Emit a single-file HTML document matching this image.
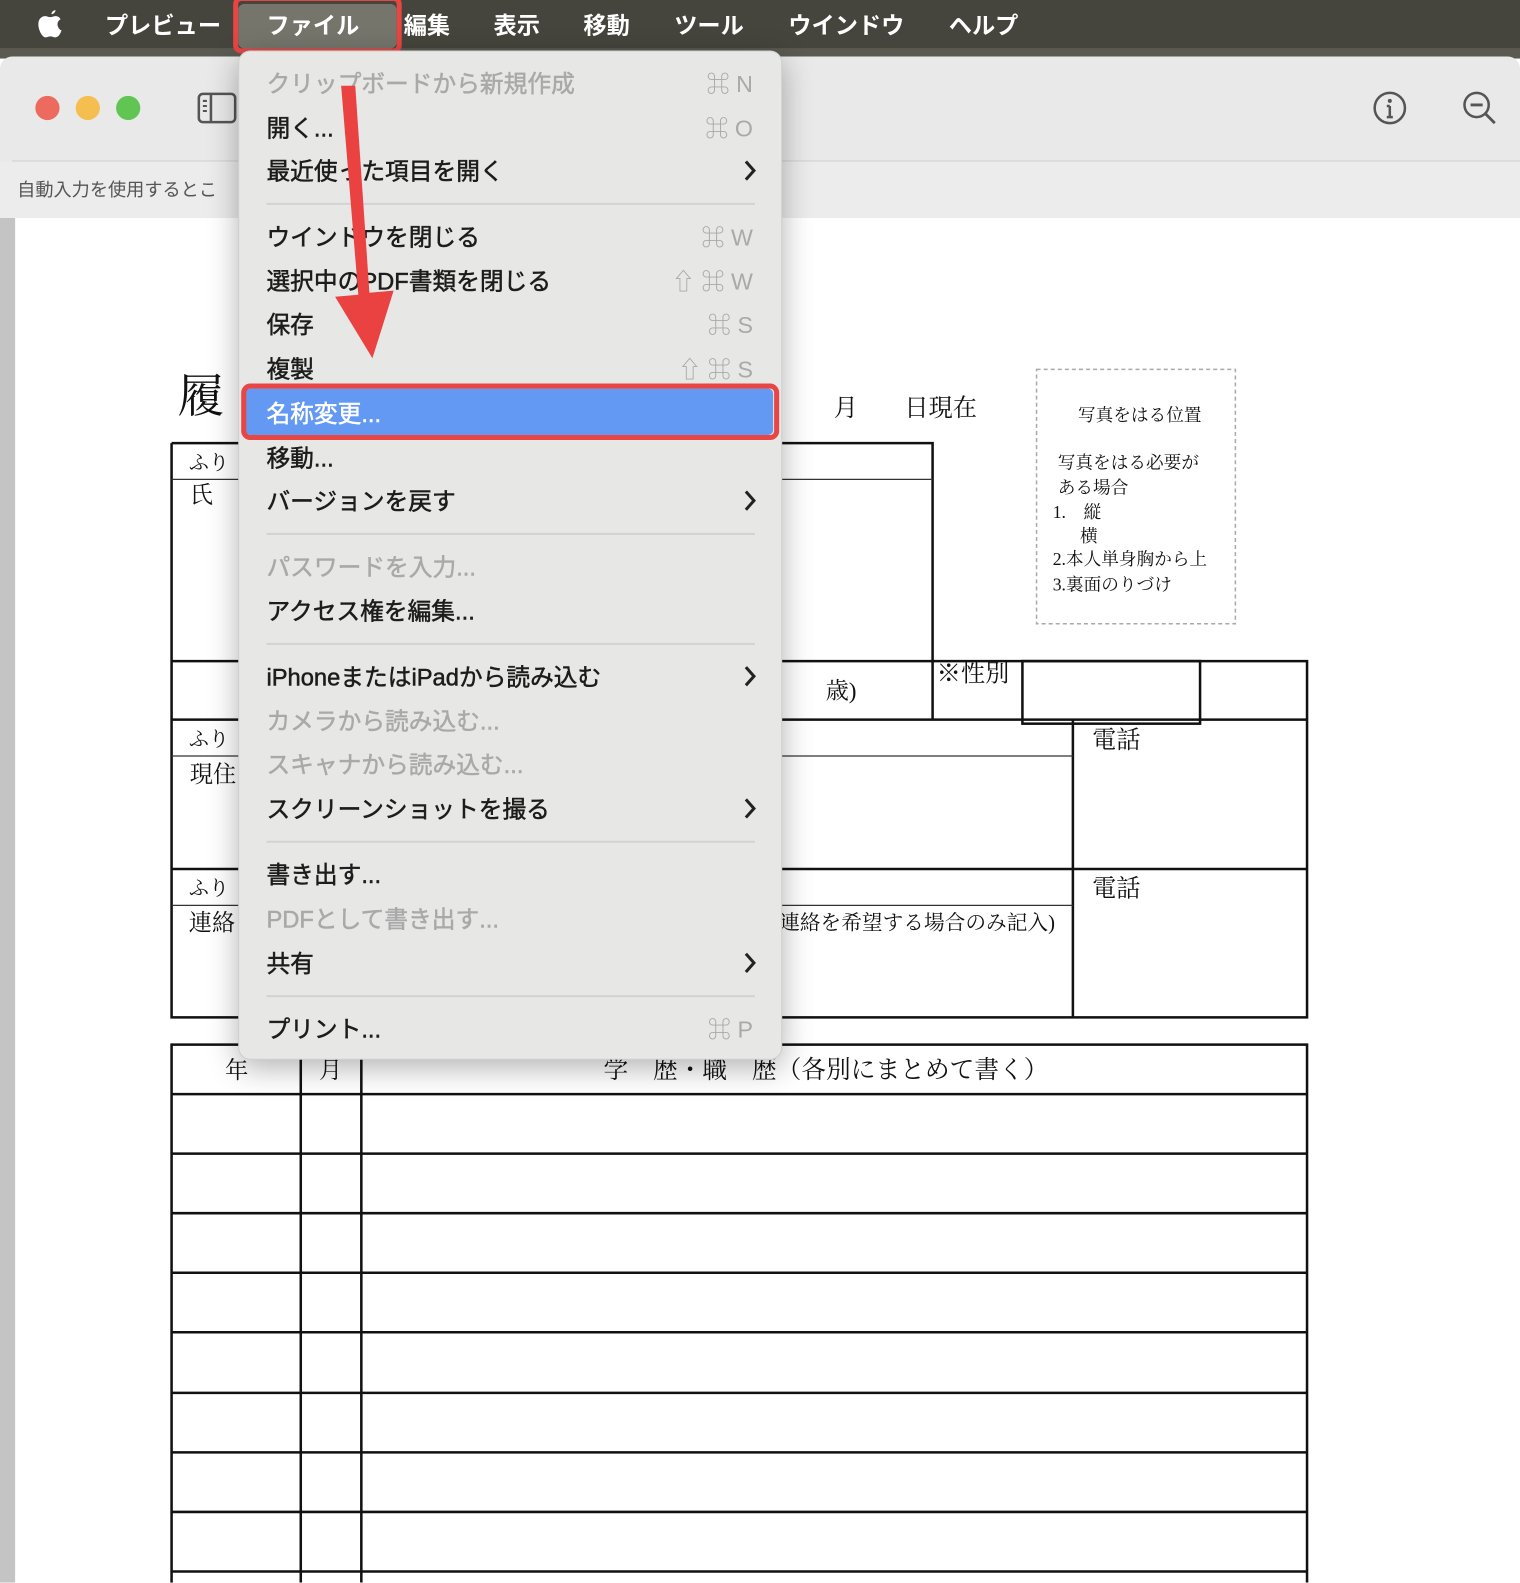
<!DOCTYPE html>
<html><head><meta charset="utf-8"><style>
*{margin:0;padding:0;box-sizing:border-box}
body{width:1520px;height:1583px;overflow:hidden;background:#fff;font-family:"Liberation Sans","Noto Sans CJK JP",sans-serif}
#s{width:1506px;height:1568px;transform:scale(1.0093);transform-origin:0 0;position:relative;overflow:hidden;background:#fff}
.a{position:absolute;white-space:nowrap}
#bar{left:0;top:0;width:1506px;height:48px;background:#45453d}
.mb{top:6px;color:#fff;font-size:23px;font-weight:bold}
#menu{left:236px;top:50px;width:539px;height:1000px;background:#e7e7e6;border-radius:12px;box-shadow:0 8px 30px rgba(0,0,0,.3);border:1px solid #cfcfcf}
.mi{left:27px;font-size:23.5px;color:#1c1c1c;-webkit-text-stroke:0.5px currentColor;margin-top:-4px}
.g{color:#a9a9a9}
.sc{right:28px;font-size:23px;color:#a9a9a9;margin-top:-4px}
.ch{right:24px;margin-top:-4px}
.sep{left:27px;width:484px;height:2px;background:#d3d3d3}
</style></head><body><div id="s">
<div class="a" style="left:0;top:48px;width:1506px;height:10px;background:#5a5a50"></div>
<div class="a" style="left:0;top:56px;width:1506px;height:160px;background:#e9e9e9;border-radius:12px 12px 0 0"></div>
<div class="a" style="left:12px;top:159px;width:1494px;height:1px;background:#d0d0d0"></div>
<div class="a" style="left:0;top:160px;width:1506px;height:56px;background:#ececec"></div>
<div class="a" style="left:17px;top:174px;font-size:18px;color:#555">自動入力を使用するとこ</div>
<div class="a" style="left:0;top:216px;width:15px;height:1352px;background:#c4c4c4"></div>
<div class="a" style="left:35px;top:95px;width:24px;height:24px;border-radius:50%;background:#ec6a5e"></div>
<div class="a" style="left:75px;top:95px;width:24px;height:24px;border-radius:50%;background:#f4bf4f"></div>
<div class="a" style="left:115px;top:95px;width:24px;height:24px;border-radius:50%;background:#61c554"></div>
<svg class="a" style="left:195px;top:91px" width="40" height="32"><rect x="2" y="2" width="36" height="28" rx="4" fill="none" stroke="#555" stroke-width="2.5"/><line x1="14" y1="2" x2="14" y2="30" stroke="#555" stroke-width="2.5"/><path d="M6 9h4M6 14h4M6 19h4" stroke="#555" stroke-width="2"/></svg>
<svg class="a" style="left:1358px;top:88px" width="38" height="38"><circle cx="19" cy="19" r="15" fill="none" stroke="#555" stroke-width="2.5"/><circle cx="19" cy="12" r="2" fill="#555"/><path d="M19 17v11M16 17h3M16 28h6" stroke="#555" stroke-width="2.5"/></svg>
<svg class="a" style="left:1446px;top:88px" width="40" height="40"><circle cx="17" cy="16" r="12" fill="none" stroke="#555" stroke-width="2.5"/><path d="M11 16h12M26 25l9 9" stroke="#555" stroke-width="2.8"/></svg>

<svg class="a" style="left:0;top:0" width="1506" height="1568">
<g stroke="#111" fill="none" stroke-width="2.5">
<path d="M170 439H924V713M170 439V1008H1295V655H924M170 655H924M170 713H1295M170 861H1295M1063 713V1008"/>
<rect x="1013" y="655" width="176" height="62"/>
<rect x="170" y="1035" width="1125" height="540"/>
<path d="M170 1084H1295M170 1143H1295M170 1202H1295M170 1261H1295M170 1320H1295M170 1380H1295M170 1439H1295M170 1498H1295M170 1557H1295M298 1035V1568M358 1035V1568"/>
</g>
<path d="M170 475H924M170 749H1063M170 897H1063" stroke="#333" stroke-width="1.2"/>
<rect x="1027" y="366" width="197" height="252" fill="none" stroke="#aaa" stroke-width="1.5" stroke-dasharray="4 3"/>
<g font-family="Liberation Serif,Noto Serif CJK SC,serif" fill="#111">
<text x="176" y="408" font-size="46">履</text>
<text x="826" y="412" font-size="24">月</text>
<text x="896" y="412" font-size="24">日現在</text>
<text x="1068" y="417" font-size="17.5">写真をはる位置</text>
<text x="1048" y="464" font-size="17.5">写真をはる必要が</text>
<text x="1048" y="489" font-size="17.5">ある場合</text>
<text x="1043" y="513" font-size="17.5">1.　縦</text>
<text x="1070" y="537" font-size="17.5">横</text>
<text x="1043" y="560" font-size="17.5">2.本人単身胸から上</text>
<text x="1043" y="585" font-size="17.5">3.裏面のりづけ</text>
<text x="187" y="465" font-size="20">ふり</text>
<text x="188" y="498" font-size="23">氏</text>
<text x="818" y="692" font-size="23">歳)</text>
<text x="928" y="675" font-size="24">※性別</text>
<text x="187" y="739" font-size="20">ふり</text>
<text x="188" y="775" font-size="23">現住</text>
<text x="1082" y="741" font-size="24">電話</text>
<text x="187" y="887" font-size="20">ふり</text>
<text x="187" y="922" font-size="23">連絡</text>
<text x="1082" y="888" font-size="24">電話</text>
<text x="772" y="921" font-size="20.5">連絡を希望する場合のみ記入)</text>
<text x="223" y="1068" font-size="23">年</text>
<text x="316" y="1068" font-size="23">月</text>
<text x="598" y="1068" font-size="24.5">学　歴・職　歴（各別にまとめて書く）</text>
</g>
</svg>

<div class="a" id="bar"></div>
<svg class="a" style="left:36px;top:8px" width="28" height="32"><path d="M19 2c-2 0-4 2-4 4 2 0 4-2 4-4zM14 9c-2 0-4-1-5-1-4 0-7 3-7 8 0 6 4 13 7 13 2 0 3-1 5-1s3 1 5 1c3 0 5-4 6-7-3-1-4-4-4-6 0-3 2-4 3-5-1-2-3-3-5-3-2 0-3 1-5 1z" fill="#fff"/></svg>
<div class="a mb" style="left:104px">プレビュー</div>
<div class="a" style="left:236px;top:4px;width:157px;height:44px;background:#75756c;border-radius:6px"></div>
<div class="a mb" style="left:264px">ファイル</div>
<div class="a mb" style="left:400px">編集</div>
<div class="a mb" style="left:489px">表示</div>
<div class="a mb" style="left:578px">移動</div>
<div class="a mb" style="left:668px">ツール</div>
<div class="a mb" style="left:781px">ウインドウ</div>
<div class="a mb" style="left:940px">ヘルプ</div>
<div class="a" style="left:231px;top:-4px;width:167px;height:57px;border:5px solid #e84545;border-radius:8px"></div>

<div class="a" id="menu">
<div class="a mi g" style="top:17px">クリップボードから新規作成</div><div class="a sc" style="top:17px">⌘ N</div>
<div class="a mi" style="top:61px">開く...</div><div class="a sc" style="top:61px">⌘ O</div>
<div class="a mi" style="top:104px">最近使った項目を開く</div><svg class="a ch" style="top:110px" width="14" height="24"><path d="M3 3l8 9-8 9" fill="none" stroke="#222" stroke-width="3"/></svg>
<div class="a sep" style="top:150px"></div>
<div class="a mi" style="top:169px">ウインドウを閉じる</div><div class="a sc" style="top:169px">⌘ W</div>
<div class="a mi" style="top:213px">選択中のPDF書類を閉じる</div><div class="a sc" style="top:213px">⇧ ⌘ W</div>
<div class="a mi" style="top:256px">保存</div><div class="a sc" style="top:256px">⌘ S</div>
<div class="a mi" style="top:300px">複製</div><div class="a sc" style="top:300px">⇧ ⌘ S</div>
<div class="a" style="left:6px;top:334px;width:523px;height:46px;background:#6399f2;border-radius:5px"></div>
<div class="a" style="left:2px;top:329px;width:533px;height:56px;border:5px solid #e84545;border-radius:9px"></div>
<div class="a mi" style="top:344px;color:#fff">名称変更...</div>
<div class="a mi" style="top:388px">移動...</div>
<div class="a mi" style="top:431px">バージョンを戻す</div><svg class="a ch" style="top:437px" width="14" height="24"><path d="M3 3l8 9-8 9" fill="none" stroke="#222" stroke-width="3"/></svg>
<div class="a sep" style="top:477px"></div>
<div class="a mi g" style="top:496px">パスワードを入力...</div>
<div class="a mi" style="top:540px">アクセス権を編集...</div>
<div class="a sep" style="top:586px"></div>
<div class="a mi" style="top:605px">iPhoneまたはiPadから読み込む</div><svg class="a ch" style="top:611px" width="14" height="24"><path d="M3 3l8 9-8 9" fill="none" stroke="#222" stroke-width="3"/></svg>
<div class="a mi g" style="top:649px">カメラから読み込む...</div>
<div class="a mi g" style="top:692px">スキャナから読み込む...</div>
<div class="a mi" style="top:736px">スクリーンショットを撮る</div><svg class="a ch" style="top:742px" width="14" height="24"><path d="M3 3l8 9-8 9" fill="none" stroke="#222" stroke-width="3"/></svg>
<div class="a sep" style="top:782px"></div>
<div class="a mi" style="top:801px">書き出す...</div>
<div class="a mi g" style="top:845px">PDFとして書き出す...</div>
<div class="a mi" style="top:889px">共有</div><svg class="a ch" style="top:895px" width="14" height="24"><path d="M3 3l8 9-8 9" fill="none" stroke="#222" stroke-width="3"/></svg>
<div class="a sep" style="top:935px"></div>
<div class="a mi" style="top:954px">プリント...</div><div class="a sc" style="top:954px">⌘ P</div>
</div>

<svg class="a" style="left:0;top:0" width="800" height="400"><path d="M338 85L352 85L366 290L390 288L369 355L332 294L355 292Z" fill="#ea4141"/></svg>
</div></body></html>
